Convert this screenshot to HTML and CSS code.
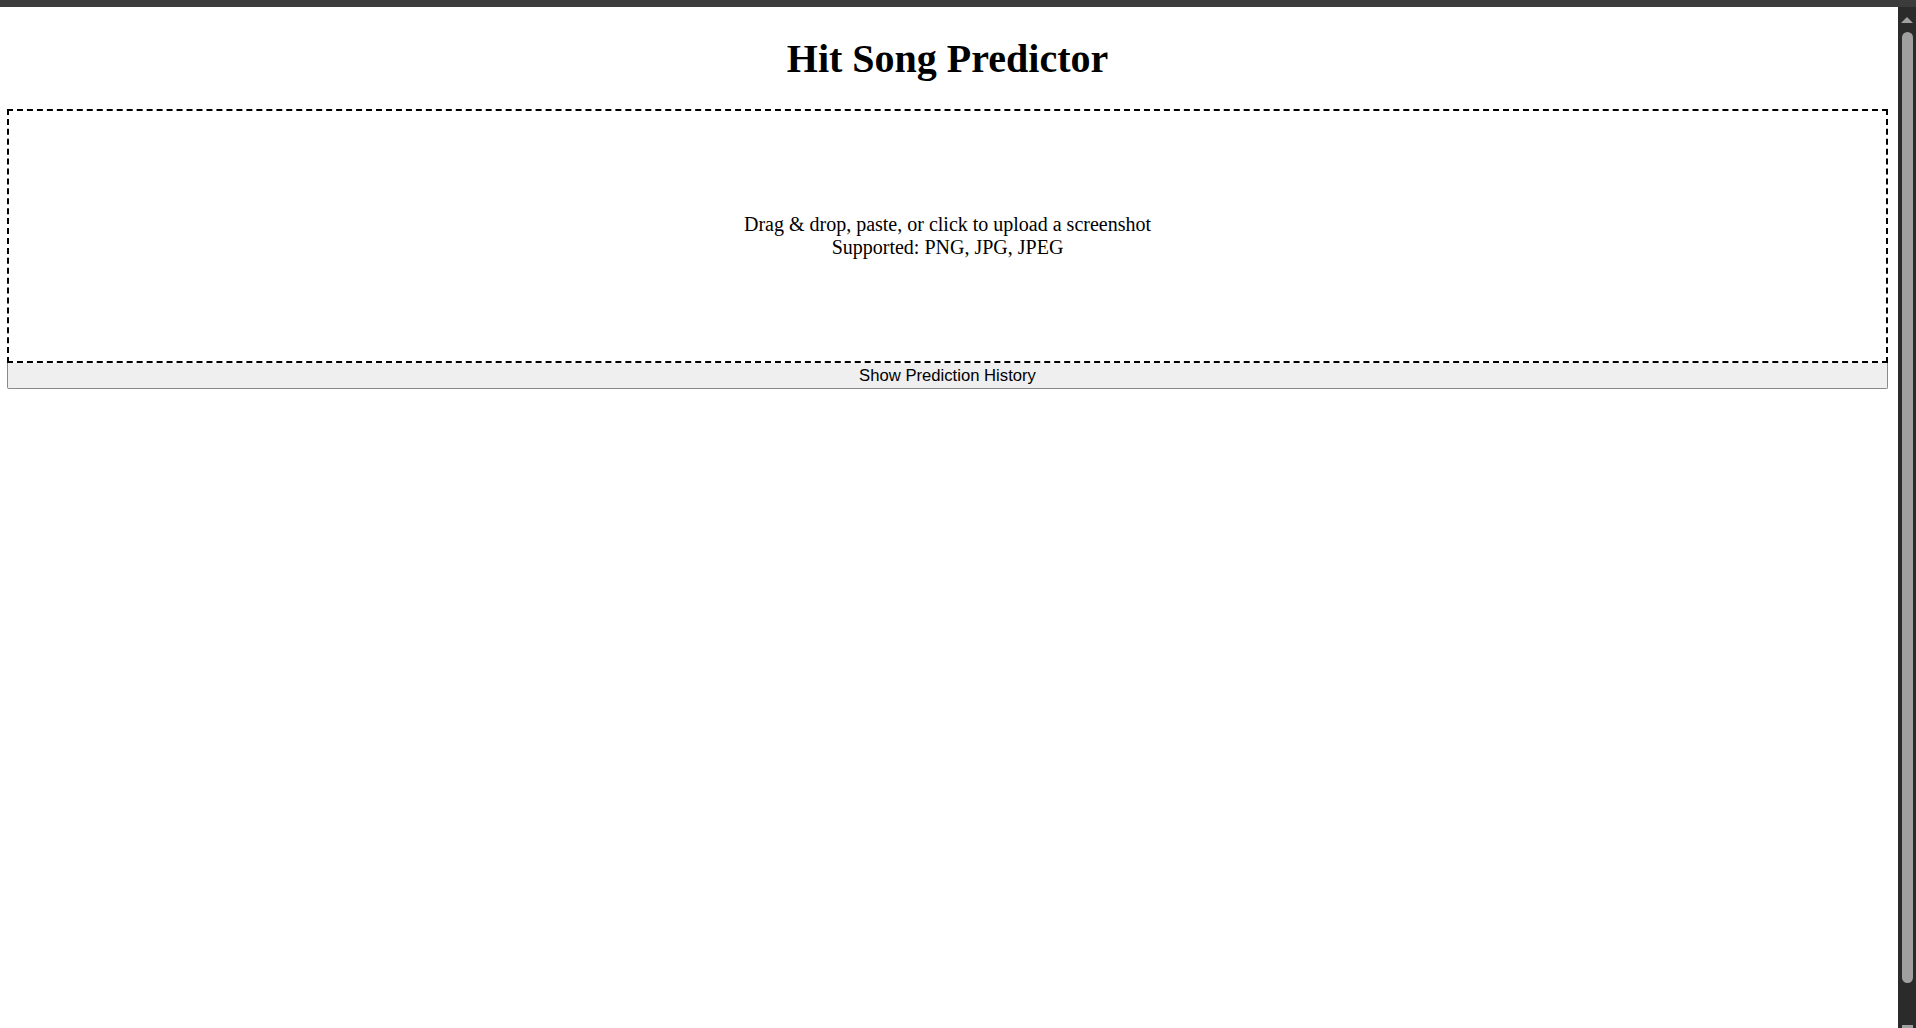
FILE: index.html
```html
<!DOCTYPE html>
<html lang="en">
<head>
<meta charset="utf-8">
<title>Hit Song Predictor</title>
<link rel="stylesheet" href="styles.css">
</head>
<body>
<div class="topbar"></div>
<div class="viewport">
  <main class="page">
    <h1 class="title">Hit Song Predictor</h1>
    <div class="dropzone">
      <div>Drag &amp; drop, paste, or click to upload a screenshot</div>
      <div>Supported: PNG, JPG, JPEG</div>
    </div>
    <button class="history-btn" type="button">Show Prediction History</button>
  </main>
  <div class="scrollbar">
    <div class="arrow-up"></div>
    <div class="thumb"></div>
    <div class="arrow-down"></div>
  </div>
</div>
</body>
</html>
```

FILE: styles.css
```css
html, body {
  margin: 0;
  padding: 0;
  background: #ffffff;
  overflow: hidden;
}

body {
  width: 1916px;
  height: 1028px;
  font-family: "Liberation Serif", "Times New Roman", serif;
  color: #000;
}

.topbar {
  height: 7px;
  background: #3c3c3c;
}

.viewport {
  display: flex;
  height: 1021px;
}

.page {
  flex: 1;
  padding: 0 10px 0 7px;
  display: flex;
  flex-direction: column;
}

.title {
  margin: 29px 0 27px;
  font-size: 40px;
  line-height: 46px;
  font-weight: bold;
  text-align: center;
}

.dropzone {
  box-sizing: border-box;
  height: 254px;
  border: 2px dashed #000;
  display: flex;
  flex-direction: column;
  justify-content: center;
  align-items: center;
  font-size: 20px;
  line-height: 23px;
  text-align: center;
}

.history-btn {
  box-sizing: border-box;
  height: 26px;
  width: 100%;
  margin: 0;
  padding: 0;
  background: #efefef;
  border: 1px solid #8a8a8a;
  border-top: none;
  border-radius: 0 0 2px 2px;
  font-family: "Liberation Sans", Arial, sans-serif;
  font-size: 16.67px;
  line-height: 22px;
  color: #000;
}

.scrollbar {
  width: 18px;
  background: #2b2b2b;
  display: flex;
  flex-direction: column;
  align-items: center;
}

.arrow-up {
  margin-top: 10px;
  width: 0;
  height: 0;
  border-left: 6px solid transparent;
  border-right: 6px solid transparent;
  border-bottom: 6px solid #a0a0a0;
}

.thumb {
  margin-top: 9px;
  width: 11px;
  height: 951px;
  background: #a0a0a0;
  border-radius: 6px;
}

.arrow-down {
  margin-top: 42px;
  width: 11px;
  height: 3px;
  background: #a0a0a0;
}
```
